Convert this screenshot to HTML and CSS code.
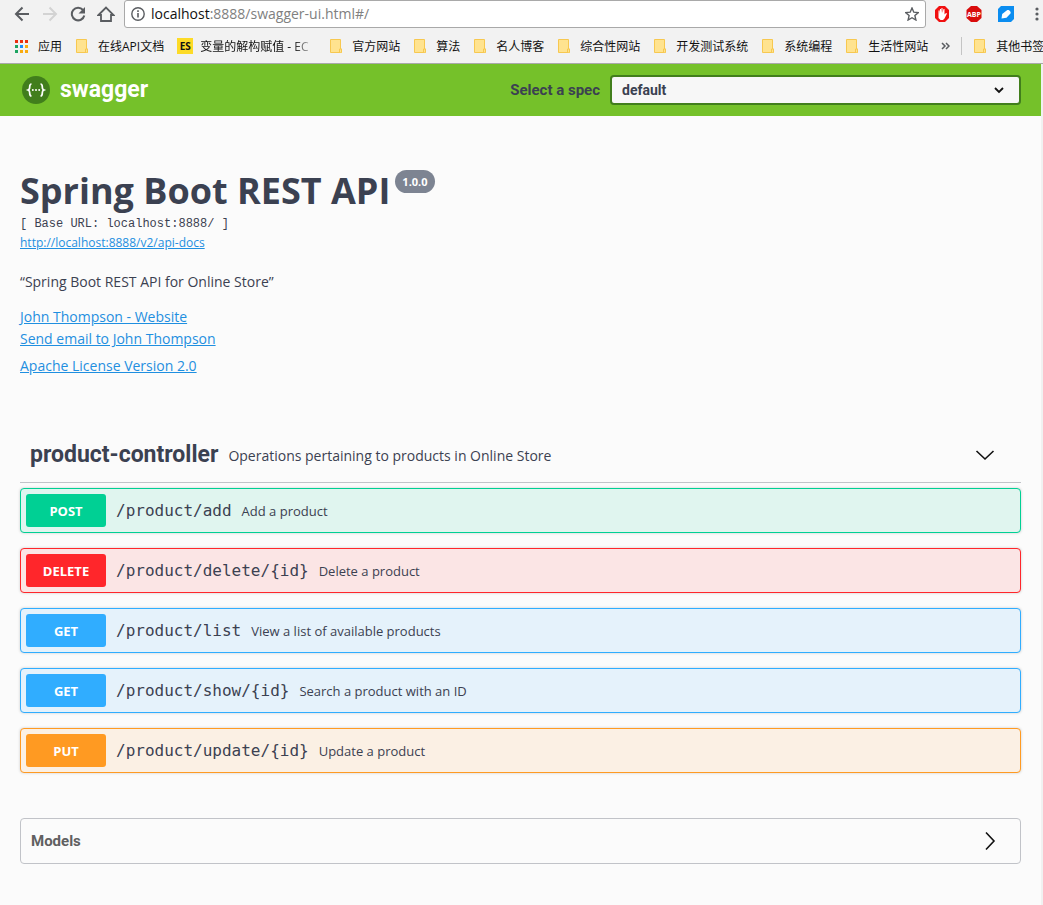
FILE: index.html
```html
<!DOCTYPE html>
<html lang="zh-CN">
<head>
<meta charset="utf-8">
<title>Swagger UI</title>
<link rel="stylesheet" href="styles.css">
</head>
<body>
<svg class="sprite" aria-hidden="true">
  <symbol id="folder" viewBox="0 0 16 16"><path d="M1.500 1.500h10v9.500l1 0v3.500h-11z" fill="#ffe38f" stroke="#f7c850"/><path d="M10.500 14v-3h2v3.500" fill="#ffe38f" stroke="#f7c850"/></symbol>
</svg>
<header class="browser">
  <div class="toolbar">
    <button class="tool" aria-label="Back"><svg width="16" height="16" viewBox="0 0 16 16" fill="none" stroke="#5a5d61" stroke-width="2"><path d="M15 8H2M8.500 1.500L2 8l6.500 6.500"/></svg></button>
    <button class="tool" aria-label="Forward"><svg width="16" height="16" viewBox="0 0 16 16" fill="none" stroke="#d3d3d3" stroke-width="2"><path d="M1 8h13M7.500 1.500L14 8l-6.500 6.500"/></svg></button>
    <button class="tool" aria-label="Reload"><svg width="16" height="16" viewBox="0 0 16 16"><path d="M13 4a6.300 6.300 0 1 0 1.300 5.500" fill="none" stroke="#5a5d61" stroke-width="2"/><path d="M15 1v6.500H8.500z" fill="#5a5d61"/></svg></button>
    <button class="tool" aria-label="Home"><svg width="18" height="16" viewBox="0 0 18 16" fill="none" stroke="#5a5d61" stroke-width="1.800"><path d="M1.500 9L9 1.500 16.500 9H14v6H4V9z"/></svg></button>
    <div class="omnibox">
      <svg width="14" height="14" viewBox="0 0 14 14"><circle cx="7" cy="7" r="6.200" fill="none" stroke="#5a5d61" stroke-width="1.400"/><path d="M6.200 6h1.600v4.500H6.200zM6.200 3.300h1.600v1.600H6.200z" fill="#5a5d61"/></svg>
      <span class="url"><b>localhost</b>:8888/swagger-ui.html#/</span>
      <svg width="14" height="14" viewBox="0 0 14 14"><path d="M7 1l1.800 4.200 4.500.4-3.400 3 1 4.400L7 10.700 3.100 13l1-4.400-3.400-3 4.500-.4z" fill="none" stroke="#5a5d61" stroke-width="1.400"/></svg>
    </div>
    <div class="extensions">
      <svg width="16" height="16" viewBox="0 0 16 16"><path d="M5 0h6l4 4v8l-4 4H5l-4-4V4z" fill="#f01010"/><path d="M4.500 8V4.500h1V8L6 3h1v4l.5-5h1v5L9.500 3h1v5.500L12 7l1 .5-2.500 5-1.500 1.500H6.500L4.500 12z" fill="#fff"/></svg>
      <svg width="18" height="16" viewBox="0 0 18 16"><path d="M6 0h6l4.500 4v8L12 16H6l-4.500-4V4z" fill="#d90c0c"/><text x="9" y="11" text-anchor="middle" class="abp">ABP</text></svg>
      <svg width="16" height="16" viewBox="0 0 16 16"><path d="M3 0h13v13l-3 3H0V3z" fill="#0b8df0"/><path d="M3.500 12.500l.7-4.500L9 4.200c2-.8 4.300 1.500 3.500 3.200L8.500 11.800z" fill="#fff"/></svg>
      <svg width="4" height="16" viewBox="0 0 4 16" fill="#5a5d61"><circle cx="2" cy="3" r="1.600"/><circle cx="2" cy="8" r="1.600"/><circle cx="2" cy="13" r="1.600"/></svg>
    </div>
  </div>
  <nav class="bookmarks">
    <a class="bookmark" href="#"><svg width="16" height="16" viewBox="0 0 16 16"><path d="M0 2h3v3H0zM5 2h3v3H5zM10 2h3v3h-3z" fill="#ea2f10"/><path d="M0 7h3v3H0z" fill="#1da462"/><path d="M5 7h3v3H5z" fill="#1a8cff"/><path d="M10 7h3v3h-3zM5 12h3v3H5zM10 12h3v3h-3z" fill="#f9ab0f"/><path d="M0 12h3v3H0z" fill="#1da462"/></svg>应用</a>
    <a class="bookmark" href="#"><svg width="16" height="16"><use href="#folder"/></svg>在线API文档</a>
    <a class="bookmark" href="#"><span class="es">ES</span><span class="fade">变量的解构赋值 - EC</span></a>
    <a class="bookmark" href="#"><svg width="16" height="16"><use href="#folder"/></svg>官方网站</a>
    <a class="bookmark" href="#"><svg width="16" height="16"><use href="#folder"/></svg>算法</a>
    <a class="bookmark" href="#"><svg width="16" height="16"><use href="#folder"/></svg>名人博客</a>
    <a class="bookmark" href="#"><svg width="16" height="16"><use href="#folder"/></svg>综合性网站</a>
    <a class="bookmark" href="#"><svg width="16" height="16"><use href="#folder"/></svg>开发测试系统</a>
    <a class="bookmark" href="#"><svg width="16" height="16"><use href="#folder"/></svg>系统编程</a>
    <a class="bookmark" href="#"><svg width="16" height="16"><use href="#folder"/></svg>生活性网站</a>
    <button class="more" aria-label="More bookmarks"><svg width="9" height="8" viewBox="0 0 9 8" fill="none" stroke="#5a5d61" stroke-width="1.500"><path d="M1 1l3 3-3 3M5 1l3 3-3 3"/></svg></button>
    <a class="bookmark other" href="#"><svg width="16" height="16"><use href="#folder"/></svg>其他书签</a>
  </nav>
</header>
<div class="page">
  <div class="topbar">
    <a class="brand" href="#"><svg width="28" height="28" viewBox="0 0 28 28"><circle cx="14" cy="14" r="14" fill="#417e1c"/><path d="M9.500 8C7 8 8 11 7.500 12.500 7.200 13.500 6 14 6 14s1.200.5 1.500 1.500C8 17 7 20 9.500 20M18.500 8c2.500 0 1.500 3 2 4.500.3 1 1.500 1.500 1.500 1.500s-1.200.5-1.500 1.500c-.5 1.500.5 4.500-2 4.500" fill="none" stroke="#fff" stroke-width="1.700"/><g fill="#fff"><circle cx="10.800" cy="14" r="1"/><circle cx="14" cy="14" r="1"/><circle cx="17.200" cy="14" r="1"/></g></svg>swagger</a>
    <label class="spec-label" for="spec">Select a spec</label>
    <div class="spec">
      <select id="spec"><option>default</option></select>
      <svg class="caret" width="10" height="7" viewBox="0 0 10 7" fill="none" stroke="#111" stroke-width="1.800"><path d="M1 1l4 4 4-4"/></svg>
    </div>
  </div>
  <main class="content">
    <section class="info">
      <h1>Spring Boot REST API<span class="version">1.0.0</span></h1>
      <div class="base">[ Base URL: localhost:8888/ ]</div>
      <a class="docs" href="#">http://localhost:8888/v2/api-docs</a>
      <p class="description">“Spring Boot REST API for Online Store”</p>
      <div class="contact">
        <a href="#">John Thompson - Website</a>
        <a href="#">Send email to John Thompson</a>
      </div>
      <a href="#">Apache License Version 2.0</a>
    </section>
    <section>
      <div class="tag">
        <h2>product-controller</h2>
        <span class="tag-text">Operations pertaining to products in Online Store</span>
        <button class="expand" aria-label="Collapse"><svg width="20" height="20" viewBox="0 0 20 20" fill="none" stroke="#111" stroke-width="1.600"><path d="M1.500 6l8.500 8 8.500-8"/></svg></button>
      </div>
      <div class="operations">
        <div class="op post"><button class="method">POST</button><span class="path">/product/add</span><span class="summary">Add a product</span></div>
        <div class="op delete"><button class="method">DELETE</button><span class="path">/product/delete/{id}</span><span class="summary">Delete a product</span></div>
        <div class="op get"><button class="method">GET</button><span class="path">/product/list</span><span class="summary">View a list of available products</span></div>
        <div class="op get"><button class="method">GET</button><span class="path">/product/show/{id}</span><span class="summary">Search a product with an ID</span></div>
        <div class="op put"><button class="method">PUT</button><span class="path">/product/update/{id}</span><span class="summary">Update a product</span></div>
      </div>
    </section>
    <section class="models">
      <h3>Models</h3>
      <button class="expand" aria-label="Expand"><svg width="20" height="20" viewBox="0 0 20 20" fill="none" stroke="#111" stroke-width="1.600"><path d="M6 1.500l8 8.500-8 8.500"/></svg></button>
    </section>
  </main>
</div>
</body>
</html>
```
FILE: styles.css
```css
* { box-sizing: border-box; }
body {
  margin: 0;
  min-height: 100vh;
  display: flex;
  flex-direction: column;
  background: #fbfbfb;
  color: #3b4151;
  font-family: "Open Sans", "Noto Sans CJK SC", sans-serif;
}
button { border: 0; padding: 0; background: none; font: inherit; color: inherit; }
svg { display: block; flex: none; }
.sprite { position: absolute; width: 0; height: 0; }

.browser { background: #f2f2f2; border-bottom: 1px solid #a9a9a9; overflow: hidden; }
.toolbar { display: flex; height: 28px; align-items: center; padding-right: 4px; }
.tool { width: 28px; display: flex; justify-content: center; }
.tool:first-child { margin-left: 8px; }
.omnibox {
  flex: 1;
  height: 28px;
  margin-left: 4px;
  padding: 0 6px;
  display: flex;
  align-items: center;
  gap: 6px;
  background: #fff;
  border: 1px solid #a9a9a9;
  border-radius: 3px;
}
.url { flex: 1; font-size: 14px; line-height: 18px; padding-bottom: 1px; color: #808080; }
.url b { font-weight: 400; color: #111; }
.extensions { display: flex; gap: 15px; padding-left: 8px; }
.extensions svg:last-child { margin-left: 6px; }
.abp { font: bold 7px "Open Sans", sans-serif; fill: #fff; }

.bookmarks {
  display: flex;
  align-items: center;
  gap: 13px;
  height: 35px;
  padding-left: 15px;
  font: 12px "Open Sans", "Noto Sans CJK SC", sans-serif;
  white-space: nowrap;
}
.bookmark { flex: none; display: flex; align-items: center; gap: 7px; color: #111; text-decoration: none; }
.es { width: 16px; height: 16px; background: #fddb27; font-size: 10px; font-weight: 700; line-height: 16px; text-align: center; }
.fade {
  width: 116px;
  -webkit-mask-image: linear-gradient(to right, #000 80%, transparent);
  mask-image: linear-gradient(to right, #000 80%, transparent);
}
.other { border-left: 1px solid #c4c4c4; padding-left: 11px; margin-left: -2px; }

.page { flex: 1; margin-right: 2px; box-shadow: 2px 0 #f1f1f1; background: #fbfbfb; }
.topbar { display: flex; align-items: center; padding: 11px 20px; background: #75c12a; }
.brand {
  flex: 1;
  display: flex;
  align-items: center;
  gap: 10px;
  padding-left: 2px;
  color: #fff;
  font: 700 23px/30px Roboto, sans-serif;
  text-decoration: none;
}
.spec-label { margin-right: 10px; font: 700 15px Roboto, sans-serif; }
.spec { position: relative; width: 411px; }
.spec select {
  width: 100%;
  height: 30px;
  display: block;
  appearance: none;
  padding: 0 10px;
  border: 2px solid #417e1c;
  border-radius: 4px;
  background: #f7f7f7;
  color: #3b4151;
  font: 700 14px Roboto, sans-serif;
}
.caret { position: absolute; right: 17px; top: 12px; pointer-events: none; }

.content { padding: 0 20px 40px; }
.info { padding: 50px 0 45px; font-size: 14px; line-height: 22px; }
.info a { color: #1f8fe0; }
h1, h2, h3 { margin: 0; }
h1 { display: flex; align-items: flex-start; gap: 5px; font-size: 36px; line-height: 49px; }
.version {
  margin-top: 4px;
  padding: 0 7px;
  border-radius: 12px;
  background: #7d8492;
  color: #fff;
  font-size: 11px;
  line-height: 23px;
}
.base { padding-top: 1px; font: 12px/16px "Liberation Mono", monospace; }
.info .docs { display: block; font-size: 12px; line-height: 22px; }
.description { margin: 17px 0 13px; }
.contact { display: flex; flex-direction: column; align-items: flex-start; margin-bottom: 5px; }

.tag { display: flex; align-items: center; gap: 10px; padding: 18px 26px 12px 10px; border-bottom: 1px solid #c1c3c8; }
h2 { font: 700 23px/30px Roboto, sans-serif; }
.tag-text { flex: 1; font-size: 14px; }
.operations { display: flex; flex-direction: column; gap: 15px; padding-top: 5px; }
.op {
  display: flex;
  align-items: center;
  padding: 5px;
  border: 1px solid;
  border-radius: 4px;
  box-shadow: 0 0 3px rgba(0, 0, 0, .19);
}
.method { width: 80px; height: 33px; border-radius: 3px; color: #fff; font-size: 13px; font-weight: 700; }
.path { margin: 0 10px; font: 16px "DejaVu Sans Mono", monospace; }
.summary { font-size: 13px; }
.post { border-color: #00d094; background: #e0f5ef; }
.post .method { background: #00d094; }
.delete { border-color: #ff262b; background: #fbe5e5; }
.delete .method { background: #ff262b; }
.get { border-color: #30adff; background: #e5f2fb; }
.get .method { background: #30adff; }
.put { border-color: #ff9a22; background: #fbf0e4; }
.put .method { background: #ff9a22; }

.models {
  display: flex;
  align-items: center;
  justify-content: space-between;
  margin-top: 45px;
  padding: 11px 20px 11px 10px;
  border: 1px solid #c1c3c8;
  border-radius: 4px;
  color: #606060;
}
h3 { font: 700 15px/22px Roboto, sans-serif; }
```
